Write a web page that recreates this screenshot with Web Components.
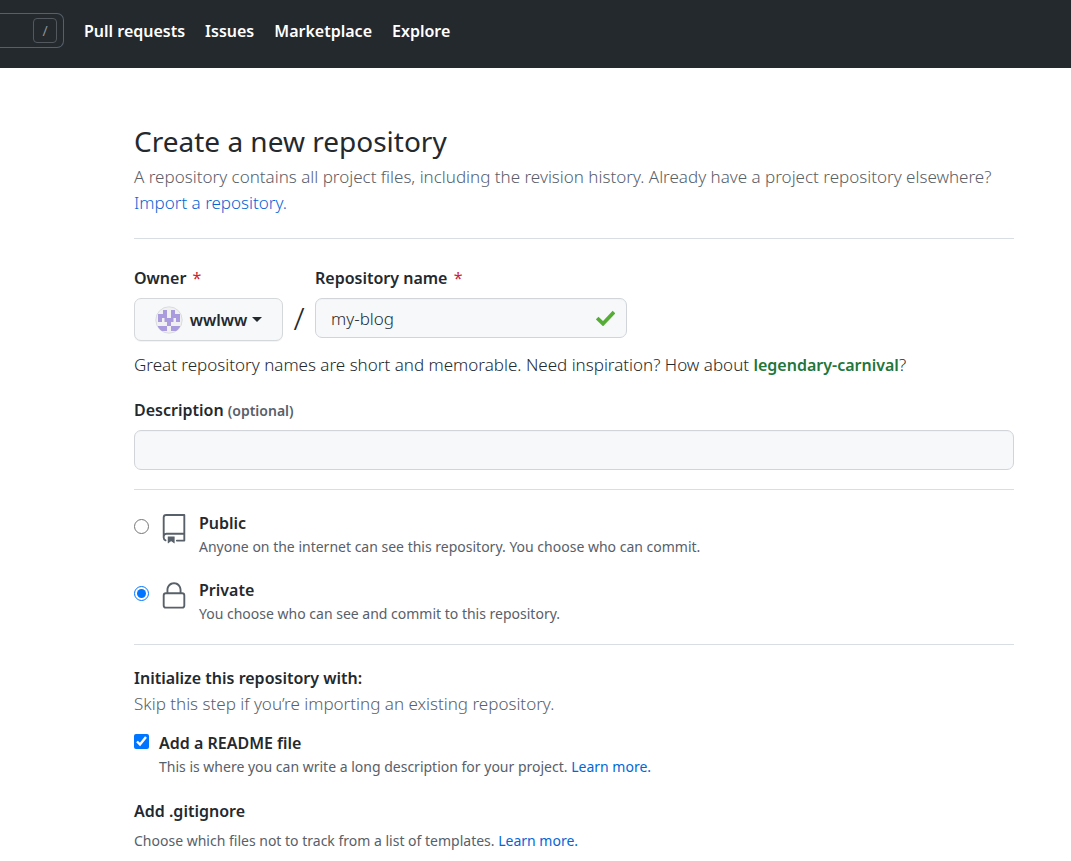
<!DOCTYPE html>
<html lang="en">
<head>
<meta charset="utf-8">
<title>Create a new repository</title>
<style>
  html { --fg: #24292e; --muted: #586069; --link: #0366d6; --line: #d8dee4; --field: #f6f8fa;
    --strong: 600 16px/26px "Noto Sans", "Open Sans", sans-serif;
    --small: 14px/22px "Noto Sans", "Open Sans", sans-serif; }
  body { margin: 0; background: #fff; color: var(--fg); font: 340 17px/26px "Noto Sans", "Open Sans", sans-serif; }
</style>
</head>
<body>
<site-header>
  <nav-link>Pull requests</nav-link>
  <nav-link>Issues</nav-link>
  <nav-link>Marketplace</nav-link>
  <nav-link>Explore</nav-link>
</site-header>
<new-repository></new-repository>

<script>
const define = (name, html) => {
  const template = document.createElement('template');
  template.innerHTML = '<style>*{box-sizing:border-box}</style>' + html;
  customElements.define(name, class extends HTMLElement {
    constructor() {
      super();
      this.attachShadow({ mode: 'open' }).append(template.content.cloneNode(true));
    }
  });
};

define('nav-link', `
<style>
  :host { display: block; }
  a { color: #fff; font: var(--strong); text-decoration: none; white-space: nowrap; }
</style>
<a href="#"><slot></slot></a>`);

define('site-header', `
<style>
  :host { display: block; background: #24292e; }
  header { display: flex; align-items: center; gap: 20px; padding: 13px 20px 20px 0; }
  .search { display: flex; align-items: center; justify-content: flex-end; width: 64px; height: 35px; padding-right: 6px;
    border: 1px solid #57606a; border-left: 0; border-radius: 0 7px 7px 0; }
  kbd { display: grid; place-items: center; width: 24px; height: 25px; border: 1px solid #52585e; border-radius: 4px;
    color: #8b9095; font: var(--small); }
  nav { display: flex; gap: 20px; }
</style>
<header>
  <div class="search"><kbd>/</kbd></div>
  <nav><slot></slot></nav>
</header>`);

define('page-intro', `
<style>
  :host { display: block; padding-bottom: 22px; border-bottom: 1px solid var(--line); }
  h1 { margin: 0 0 2px; font-size: 28px; line-height: 42px; font-weight: 400; }
  p { margin: 0; color: var(--muted); }
</style>
<h1><slot name="title"></slot></h1>
<p><slot></slot></p>`);

define('text-link', `
<style>
  :host { display: inline; }
  a { color: var(--link); text-decoration: none; }
</style>
<a href="#"><slot></slot></a>`);

define('owner-picker', `
<style>
  :host { display: block; }
  label { display: block; margin-bottom: 7px; font: var(--strong); }
  label span { color: #cb2431; font-weight: 400; margin-left: 2px; }
  button { display: flex; align-items: center; justify-content: center; width: 149px; height: 43px; padding: 0; gap: 5px;
    border: 1px solid #d5d8da; border-radius: 7px; background: #f6f8fa; box-shadow: 0 1px 0 rgba(27,31,35,.05);
    color: var(--fg); font: var(--strong); }
  .avatar { width: 28px; height: 28px; margin-right: 2px; }
</style>
<label for="owner">Owner <span>*</span></label>
<button id="owner" type="button">
  <svg class="avatar" viewBox="0 0 28 28" aria-hidden="true">
    <defs><clipPath id="disc"><circle cx="14" cy="14" r="13"/></clipPath></defs>
    <circle cx="14" cy="14" r="13.2" fill="#f0f0f0" stroke="#d9dbde"/>
    <path clip-path="url(#disc)" fill="#a99bdd" d="M8 4h4v8H7v4H3V8h5zM16 4h4v4h5v8h-4v-4h-5zM9.5 12h9v4H16v4h-4v-4H9.500zM3 20h9v5H3zM16 20h9v5h-9z"/>
  </svg>
  <slot></slot>
  <svg width="10" height="5" viewBox="0 0 10 5" aria-hidden="true"><path d="M0 0h10L5 5z" fill="#24292e"/></svg>
</button>`);

define('repo-name', `
<style>
  :host { display: block; flex: 0 1 312px; }
  label { display: block; margin-bottom: 7px; font: var(--strong); }
  label span { color: #cb2431; font-weight: 400; margin-left: 2px; }
  .box { display: flex; align-items: center; height: 40px; padding: 0 11px 0 15px; border: 1px solid #d1d5da;
    border-radius: 7px; background: var(--field); box-shadow: inset 0 1px 0 rgba(225,228,232,.2); }
  input { flex: 1; min-width: 0; height: 36px; padding: 0; border: 0; outline: 0; background: none; color: var(--fg); font: inherit; }
</style>
<label for="name">Repository name <span>*</span></label>
<div class="box">
  <input id="name" type="text" value="my-blog">
  <svg width="19" height="16" viewBox="0 0 19 16" aria-hidden="true"><path d="M1.2 8.1 7 13.7 18 2.1" fill="none" stroke="#56ad35" stroke-width="3.7"/></svg>
</div>`);

define('description-field', `
<style>
  :host { display: block; padding-bottom: 19px; border-bottom: 1px solid var(--line); }
  label { display: block; height: 26px; margin-bottom: 7px; font: var(--strong); }
  small { color: var(--muted); font: var(--small); font-weight: 600; }
  input { display: block; width: 100%; height: 40px; padding: 0 15px; border: 1px solid #d1d5da; border-radius: 7px;
    background: var(--field); box-shadow: inset 0 1px 0 rgba(225,228,232,.2); font: inherit; }
</style>
<label for="description">Description <small>(optional)</small></label>
<input id="description" type="text">`);

define('visibility-picker', `
<style>
  :host { display: grid; gap: 19px; padding: 20px 0 19px; border-bottom: 1px solid var(--line); }
  .option { display: grid; grid-template-columns: 15px 30px 1fr; column-gap: 10px; align-items: start; }
  input { width: 15px; height: 15px; margin: 9px 0 0; accent-color: #0075ff; }
  svg { width: 30px; height: 30px; margin-top: 4px; fill: var(--muted); }
  label { display: block; font: var(--strong); }
  p { margin: 0; color: var(--muted); font: var(--small); }
</style>
<div class="option">
  <input type="radio" name="visibility" id="public">
  <svg viewBox="0 0 24 24" aria-hidden="true"><path fill-rule="evenodd" d="M3 2.75A2.75 2.75 0 015.75 0h14.5a.75.75 0 01.75.75v20.5a.75.75 0 01-.75.75h-6a.75.75 0 010-1.5h5.25v-4H6A1.5 1.5 0 004.5 18v.75c0 .716.43 1.334 1.05 1.605a.75.75 0 01-.6 1.374A3.25 3.25 0 013 18.75v-16zM19.5 1.5V15H6c-.546 0-1.059.146-1.5.401V2.75c0-.69.56-1.25 1.25-1.25H19.5z"/><path d="M7 18.25a.25.25 0 01.25-.25h5a.25.25 0 01.25.25v5.01a.25.25 0 01-.397.201l-2.206-1.604a.25.25 0 00-.294 0L7.397 23.46a.25.25 0 01-.397-.2v-5.01z"/></svg>
  <div><label for="public">Public</label><p>Anyone on the internet can see this repository. You choose who can commit.</p></div>
</div>
<div class="option">
  <input type="radio" name="visibility" id="private" checked>
  <svg viewBox="0 0 24 24" aria-hidden="true"><path fill-rule="evenodd" d="M6 9V7.25C6 3.845 8.503 1 12 1s6 2.845 6 6.25V9h.5a2.5 2.5 0 012.5 2.5v8a2.5 2.5 0 01-2.5 2.5h-13A2.5 2.5 0 013 19.5v-8A2.5 2.5 0 015.5 9H6zm1.5-1.75C7.5 4.58 9.422 2.5 12 2.5c2.578 0 4.5 2.08 4.5 4.75V9h-9V7.25zm-3 4.25a1 1 0 011-1h13a1 1 0 011 1v8a1 1 0 01-1 1h-13a1 1 0 01-1-1v-8z"/></svg>
  <div><label for="private">Private</label><p>You choose who can see and commit to this repository.</p></div>
</div>`);

define('check-option', `
<style>
  :host { display: grid; grid-template-columns: 15px 1fr; column-gap: 10px; align-items: start; }
  input { width: 15px; height: 15px; margin: 4px 0 0; accent-color: #0075ff; }
  label { display: block; font: var(--strong); }
  p { margin: 0; color: var(--muted); font: var(--small); }
</style>
<input type="checkbox" id="check" checked>
<div><label for="check"><slot name="label"></slot></label><p><slot></slot></p></div>`);

define('new-repository', `
<style>
  :host { display: block; padding: 52px 57px 9px 134px; }
  .names { display: flex; align-items: flex-start; margin-top: 26px; }
  .slash { width: 32px; padding-top: 33px; font-size: 32px; line-height: 40px; text-align: center; }
  p, h2 { margin: 0; }
  .hint { margin: 11px 0 19px; }
  .hint b { color: #22763a; font: var(--strong); }
  h2 { font: var(--strong); }
  .init { margin-top: 20px; }
  .skip { margin-bottom: 13px; color: var(--muted); }
  .ignore { margin: 20px 0 6px; }
  .small { color: var(--muted); font: var(--small); }
</style>
<main>
  <page-intro><span slot="title">Create a new repository</span>A repository contains all project files, including the revision history. Already have a project repository elsewhere? <text-link>Import a repository.</text-link></page-intro>
  <div class="names">
    <owner-picker>wwlww</owner-picker>
    <span class="slash">/</span>
    <repo-name></repo-name>
  </div>
  <p class="hint">Great repository names are short and memorable. Need inspiration? How about <b>legendary-carnival</b>?</p>
  <description-field></description-field>
  <visibility-picker></visibility-picker>
  <h2 class="init">Initialize this repository with:</h2>
  <p class="skip">Skip this step if you’re importing an existing repository.</p>
  <check-option><span slot="label">Add a README file</span>This is where you can write a long description for your project. <text-link>Learn more.</text-link></check-option>
  <h2 class="ignore">Add .gitignore</h2>
  <p class="small">Choose which files not to track from a list of templates. <text-link>Learn more.</text-link></p>
</main>`);
</script>
</body>
</html>
